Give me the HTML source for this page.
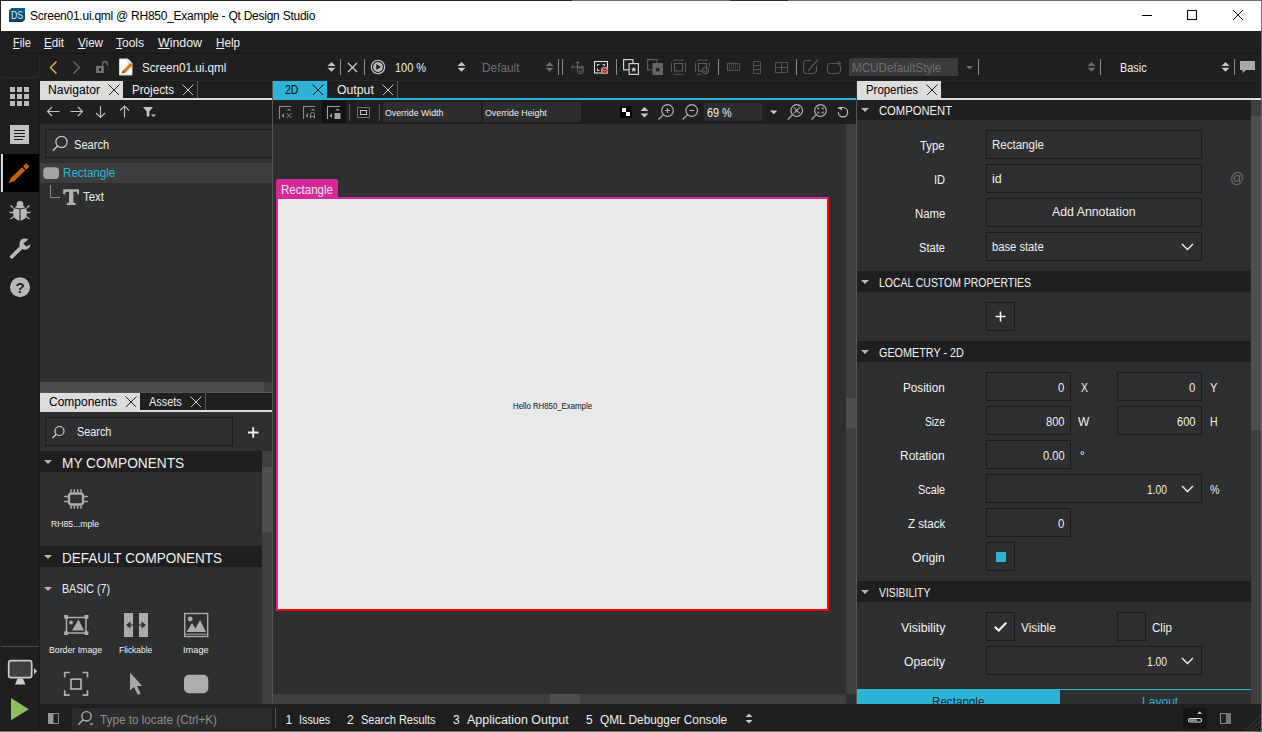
<!DOCTYPE html>
<html lang="en">
<head>
<meta charset="utf-8">
<title>Screen01.ui.qml @ RH850_Example - Qt Design Studio</title>
<style>
*{box-sizing:border-box;margin:0;padding:0}
html,body{width:1262px;height:732px;overflow:hidden;background:#2e2f30}
body{position:relative;font-family:"Liberation Sans",sans-serif;font-size:11.5px;color:#f0f0f0}
div,span,svg{position:absolute}
.t{white-space:nowrap;line-height:14px;height:14px}
.r{text-align:right}
.c{text-align:center}
u{text-decoration:underline;text-underline-offset:1px}
.dk{background:#1f1f1f}
.box{border:1px solid #1c1c1c;background:#2e2f30}
.hd{background:#1f1f1f;height:20px}
.hd .t{left:22px;top:4px;font-size:12.3px;color:#f4f4f4}
.tri{width:0;height:0;border-left:4px solid transparent;border-right:4px solid transparent;border-top:4px solid #b8b8b8}
.lab{left:857px;width:88px;text-align:right;color:#f4f4f4}
.sep{width:1px;background:#6b6b6b}
svg{overflow:visible}
</style>
</head>
<body>
<!-- ===== window frame / title bar ===== -->
<div style="left:0;top:0;width:1262px;height:31px;background:#fff"></div>
<div style="left:0;top:0;width:1262px;height:1px;background:#20262e"></div><div style="left:572px;top:0;width:690px;height:1px;background:#707070"></div><div style="left:730px;top:0;width:58px;height:1px;background:#2a2a2a"></div>
<div style="left:0;top:0;width:1px;height:732px;background:#1c222a"></div>
<svg style="left:9px;top:8px" width="16" height="14" viewBox="9 8 16 14"><defs><linearGradient id="dsg" x1="0" y1="0" x2="0" y2="1"><stop offset="0" stop-color="#0a5f92"/><stop offset="1" stop-color="#03406a"/></linearGradient></defs><path d="M11.500 8H25V19.500L22.500 22H9V10.500Z" fill="url(#dsg)"/><text x="11" y="19" font-family="Liberation Sans,sans-serif" font-size="11" fill="#dbe8f0" textLength="12.200" lengthAdjust="spacingAndGlyphs">DS</text></svg>
<div class="t" id="title" style="left:30px;top:9px;font-size:12px;color:#000;letter-spacing:-.25px">Screen01.ui.qml @ RH850_Example - Qt Design Studio</div>
<svg style="left:1142px;top:10px" width="102" height="11" viewBox="0 0 102 11" fill="none" stroke="#000" stroke-width="1"><path d="M0 5.5H10"/><rect x="45.5" y=".5" width="9" height="9"/><path d="M91 0L101 10M101 0L91 10"/></svg>

<!-- ===== menu bar ===== -->
<div class="dk" style="left:1px;top:31px;width:1261px;height:49px"></div>
<div style="left:1px;top:53px;width:1261px;height:1px;background:#191919"></div>
<div style="left:1px;top:77px;width:38px;height:1px;background:#2a2a2a"></div><div style="left:39px;top:54px;width:1px;height:24px;background:#272727"></div>
<div class="t" id="m1" style="left:12.5px;top:36px;width:auto;text-align:left;font-size:12px;transform:scaleX(0.9195);transform-origin:0 50%"><u>F</u>ile</div>
<div class="t" id="m2" style="left:44px;top:36px;width:auto;text-align:left;font-size:12px;transform:scaleX(0.966);transform-origin:0 50%"><u>E</u>dit</div>
<div class="t" id="m3" style="left:78px;top:36px;width:auto;text-align:left;font-size:12px;transform:scaleX(0.9685);transform-origin:0 50%"><u>V</u>iew</div>
<div class="t" id="m4" style="left:116px;top:36px;width:auto;text-align:left;font-size:12px;transform:scaleX(0.9994);transform-origin:0 50%"><u>T</u>ools</div>
<div class="t" id="m5" style="left:158px;top:36px;width:auto;text-align:left;font-size:12px;transform:scaleX(1.0307);transform-origin:0 50%"><u>W</u>indow</div>
<div class="t" id="m6" style="left:216.3px;top:36px;width:auto;text-align:left;font-size:12px;transform:scaleX(0.9722);transform-origin:0 50%"><u>H</u>elp</div>

<!-- ===== main toolbar ===== -->
<svg style="left:40px;top:54px" width="1222" height="24" viewBox="40 54 1222 24" fill="none">
 <path d="M56.5 61.5L50.5 67.5L56.5 73.5" stroke="#f0bd1e" stroke-width="1.4"/>
 <path d="M73.5 61.5L79.5 67.5L73.5 73.5" stroke="#6c6c6c" stroke-width="1.4"/>
 <rect x="96" y="66" width="8" height="7" fill="#6c6c6c"/><rect x="99" y="68" width="2" height="3" fill="#1f1f1f"/>
 <path d="M102.5 66V64a2.5 2.5 0 0 1 5 0V66" stroke="#6c6c6c" stroke-width="1.3"/>
 <path d="M119.500 59H128L132 63V75H119.500Z" fill="#fbfbfb" stroke="#d4d4d4"/><path d="M128 59V63H132" stroke="#c0c0c0"/>
 <path d="M122 73.500L123 70.300L130.500 63L132.800 65.200L125.300 72.500Z" fill="#e07a10"/><path d="M122 73.500L123 70.300L125.300 72.500Z" fill="#6a4418"/>
 <path d="M327.5 66L331.5 62L335.5 66ZM327.5 67.700L331.5 71.800L335.5 67.700Z" fill="#c6c6c6"/>
 <path d="M340.500 59V75M364.500 59V75" stroke="#8a8a8a"/>
 <path d="M348 63L357 72M357 63L348 72" stroke="#cccccc" stroke-width="1.200"/>
 <circle cx="378" cy="67" r="6.700" stroke="#c8c8c8" stroke-width="1.100"/><circle cx="378" cy="67" r="4.900" fill="#b8b8b8"/><path d="M376.300 64L381 67L376.300 70Z" fill="#1f1f1f"/>
 <path d="M457.5 66L461.5 62L465.5 66ZM457.5 67.700L461.5 71.800L465.5 67.700Z" fill="#c6c6c6"/>
 <path d="M545.5 66L549.5 62L553.5 66ZM545.5 67.700L549.5 71.800L553.5 67.700Z" fill="#6c6c6c"/>
 <path d="M558.500 59V75M562.500 59V75" stroke="#8a8a8a"/>
 <!-- move/reset (grey) -->
 <g stroke="#666" stroke-width="1"><path d="M577.500 61.500V70M571.500 67H583.500M575.500 63.500L577.500 61.500L579.500 63.500M573.500 65L571.500 67L573.500 69M581.500 65L583.500 67L581.500 69"/><circle cx="580.500" cy="70.500" r="3.200" fill="#1f1f1f"/><path d="M579 70.500a1.500 1.500 0 1 0 1.500-1.500" stroke-width=".9"/></g>
 <!-- frame + red reset -->
 <rect x="594.500" y="61.500" width="13" height="11.500" stroke="#e0e0e0" stroke-width="1.100"/>
 <path d="M597.500 66V64.500H599.500M602.500 64.500H604.500V66M597.500 68.500V70.500H599.500" stroke="#e0e0e0" stroke-width="1"/>
 <circle cx="604.500" cy="70.500" r="3.700" fill="#e57373"/><path d="M603 70.700a1.600 1.600 0 1 0 1.600-1.700" stroke="#1f1f1f" stroke-width=".9"/><path d="M603.500 68L605 69.200L603.500 70.200Z" fill="#1f1f1f"/>
 <path d="M616.500 59V75" stroke="#8a8a8a"/>
 <!-- copy icons -->
 <rect x="623.600" y="59.600" width="9.300" height="10.200" stroke="#cfcfcf" stroke-width="1.200"/><rect x="629.100" y="63.600" width="9.300" height="10.800" fill="#1f1f1f" stroke="#cfcfcf" stroke-width="1.200"/><path d="M633.700 66.800L634.500 68.500L636.300 68.700L635 69.900L635.300 71.700L633.700 70.800L632.100 71.700L632.400 69.900L631.100 68.700L632.900 68.500Z" fill="#cfcfcf"/>
 <rect x="647.600" y="59.600" width="9.300" height="10.200" stroke="#5e5e5e" stroke-width="1.200"/><rect x="652.500" y="63" width="10.500" height="12" fill="#666"/><path d="M657.700 66.800L658.500 68.500L660.300 68.700L659 69.900L659.300 71.700L657.700 70.800L656.100 71.700L656.400 69.900L655.100 68.700L656.900 68.500Z" fill="#1f1f1f"/>
 <path d="M671.500 62.500V72M685.500 62.500V72M673 60.200H684M673 74.300H684" stroke="#555" stroke-width="1"/><rect x="674.500" y="63.500" width="8" height="7.500" stroke="#606060" stroke-width="1.100"/>
 <path d="M695.500 62.500V72M709.500 62.500V67M697 60.200H708M697 74.300H702" stroke="#555" stroke-width="1"/><rect x="698.500" y="63.500" width="8" height="7.500" stroke="#606060" stroke-width="1.100"/><circle cx="705.500" cy="70.500" r="3.200" fill="#1f1f1f" stroke="#666"/><path d="M704 70.500a1.500 1.500 0 1 0 1.500-1.500" stroke="#666" stroke-width=".9"/>
 <path d="M718.500 59V75" stroke="#8a8a8a"/>
 <g stroke="#505050"><rect x="727.500" y="63.500" width="12" height="7"/><path d="M731.500 63.500V70.500M735.500 63.500V70.500M729.500 64V70M733.500 64V70M737.500 64V70" stroke="#3c3c3c"/>
 <rect x="753.500" y="61.500" width="7" height="12"/><path d="M753.500 65.500H760.500M753.500 69.500H760.500"/>
 <rect x="775.500" y="62.500" width="12" height="10"/><path d="M781.500 62.500V72.500M775.500 67.500H787.500"/></g>
 <path d="M796.500 59V75" stroke="#8a8a8a"/>
 <path d="M816.500 66V70.500a3 3 0 0 1-3 3H806.500a3 3 0 0 1-3-3V63.500a3 3 0 0 1 3-3H811" stroke="#585858" stroke-width="1.100"/><path d="M808 71L818 59.500" stroke="#585858" stroke-width="1.200"/>
 <path d="M840.500 66V70.500a3 3 0 0 1-3 3H830.500a3 3 0 0 1-3-3V66.500a3 3 0 0 1 3-3H840M838 61L840.500 63.500L838 66" stroke="#555" stroke-width="1.100"/>
 <rect x="849" y="58" width="109" height="18" fill="#3a3b3c"/>
 <path d="M966 66H973L969.500 69.500Z" fill="#6c6c6c"/>
 <path d="M978.500 59V75M1100.500 59V75M1234.500 59V75" stroke="#8a8a8a"/>
 <path d="M1087.5 66L1091.5 62L1095.5 66ZM1087.5 67.700L1091.5 71.800L1095.5 67.700Z" fill="#6c6c6c"/>
 <path d="M1221.5 66L1225.5 62L1229.5 66ZM1221.5 67.700L1225.5 71.800L1229.5 67.700Z" fill="#c6c6c6"/>
 <path d="M1240 61H1255V70H1246L1242.500 73V70H1240Z" fill="#a8a8a8"/>
</svg>
<div class="t" id="tb1" style="left:142px;top:61px;width:auto;text-align:left;font-size:12px;transform:scaleX(0.9721);transform-origin:0 50%">Screen01.ui.qml</div>
<div class="t" id="tb2" style="left:395.4px;top:61px;width:auto;text-align:left;font-size:12px;transform:scaleX(0.9109);transform-origin:0 50%">100 %</div>
<div class="t" id="tb3" style="left:482px;top:61px;color:#6e6e6e;width:auto;text-align:left;font-size:12px;transform:scaleX(0.986);transform-origin:0 50%">Default</div>
<div class="t" id="tb4" style="left:851.7px;top:61px;color:#6e6e6e;width:auto;text-align:left;font-size:12px;transform:scaleX(0.9703);transform-origin:0 50%">MCUDefaultStyle</div>
<div class="t" id="tb5" style="left:1120px;top:61px;width:auto;text-align:left;font-size:12px;transform:scaleX(0.9099);transform-origin:0 50%">Basic</div>
<!--TOOLBAR-->
<!-- ===== mode sidebar ===== -->
<div style="left:39px;top:78px;width:1px;height:654px;background:#191919"></div>
<div class="dk" style="left:1px;top:80px;width:38px;height:652px"></div>
<div style="left:1px;top:154px;width:38px;height:38px;background:#000"></div>
<div style="left:1px;top:154px;width:2px;height:38px;background:#d8d8d8"></div>
<div style="left:1px;top:646px;width:38px;height:1px;background:#4a4a4a"></div>
<svg style="left:0;top:78px" width="40" height="654" viewBox="0 78 40 654" fill="none">
 <g fill="#bcbcbc"><rect x="10" y="87" width="5" height="5"/><rect x="17" y="87" width="5" height="5"/><rect x="24" y="87" width="5" height="5"/><rect x="10" y="94" width="5" height="5"/><rect x="17" y="94" width="5" height="5"/><rect x="24" y="94" width="5" height="5"/><rect x="10" y="101" width="5" height="5"/><rect x="17" y="101" width="5" height="5"/><rect x="24" y="101" width="5" height="5"/></g>
 <rect x="10" y="125" width="19" height="19" fill="#c2c2c2"/><path d="M14 130.500H25M14 133.500H25M14 136.500H25M14 139.500H23" stroke="#1a1a1a" stroke-width="1.200"/>
 <g transform="translate(9 183) rotate(-44)" fill="#c5630c"><path d="M0 0L4.500 -2.300H20.300V2.300H4.500Z"/><path d="M21.600 -2.300H26.200V2.300H21.600Z"/></g>
 <g fill="#b8b8b8"><ellipse cx="20" cy="212.700" rx="7" ry="8"/><circle cx="20" cy="204.300" r="3.300"/></g><path d="M10.500 205.500L14 208.500M29.500 205.500L26 208.500M9.500 212.500H13.500M30.500 212.500H26.500M10.500 219L14 216.500M29.500 219L26 216.500" stroke="#b8b8b8" stroke-width="1.400"/><path d="M20 209V221" stroke="#1f1f1f" stroke-width="1.100"/><path d="M13 207.500Q20 210.500 27 207.500" stroke="#1f1f1f" stroke-width=".9" fill="none"/>
 <path d="M11.800 256.800L21 247.600" stroke="#b8b8b8" stroke-width="3.700" stroke-linecap="round"/><path d="M28.300 239.600a5.600 5.600 0 1 0 2.200 4.600L26.500 246.600L23.300 243.400Z" fill="#b8b8b8"/>
 <circle cx="20" cy="287.200" r="10" fill="#b8b8b8"/>
 <rect x="8.700" y="660.700" width="23" height="17" rx="2.200" fill="#404040" stroke="#cccccc" stroke-width="1.700"/><path d="M15 684.500L17.500 678.500H23L25.500 684.500Z" fill="#cccccc"/><path d="M34 668L37 671.300L34 674.600Z" fill="#cccccc"/>
 <path d="M11 698L28.800 709.200L11 720.300Z" fill="#8cbf5e"/>
</svg>
<div class="t" style="left:14px;top:280.500px;width:12px;font-size:15px;font-weight:bold;color:#1f1f1f;text-align:center">?</div>
<!--SIDEBAR-->
<!-- ===== left panel: Navigator ===== -->
<div class="dk" style="left:40px;top:80px;width:232px;height:44px"></div>
<div style="left:40px;top:81px;width:83px;height:19px;background:#dcdcdc"></div>
<div style="left:40px;top:98px;width:232px;height:2px;background:#dcdcdc"></div>
<div style="left:197px;top:81px;width:1px;height:17px;background:#5a5a5a"></div>
<div class="box" style="left:45px;top:129px;width:227px;height:29px;border-right:0"></div>
<div class="t" id="nv1" style="left:48px;top:83px;color:#000;width:auto;text-align:left;font-size:12px;transform:scaleX(1.0125);transform-origin:0 50%">Navigator</div>
<div class="t" id="nv2" style="left:132px;top:83px;width:auto;text-align:left;font-size:12px;transform:scaleX(0.9686);transform-origin:0 50%">Projects</div>
<svg style="left:40px;top:80px" width="232" height="130" viewBox="40 80 232 130" fill="none">
 <path d="M108.5 84.5L119 95M119.5 84.5L109 95" stroke="#222" stroke-width="1"/>
 <path d="M182.5 84.5L193 95M193.5 84.5L183 95" stroke="#d0d0d0" stroke-width="1"/>
 <g stroke="#c4c4c4" stroke-width="1.100"><path d="M47.500 111.500H59.500M52 107L47.500 111.500L52 116"/><path d="M70.500 111.500H82.500M78 107L82.500 111.500L78 116"/><path d="M100.500 106V117.500M96 113L100.500 117.500L105 113"/><path d="M124.500 117.500V106M120 110.500L124.500 106L129 110.500"/></g>
 <path d="M143 107H153L149.300 111.500V116.500H146.700V111.500Z" fill="#c4c4c4"/><path d="M151 114.500H156L153.500 117Z" fill="#c4c4c4"/>
 <circle cx="61.500" cy="142" r="5.600" stroke="#cacaca" stroke-width="1.200"/><path d="M57.500 146L52.800 150.700" stroke="#cacaca" stroke-width="1.300"/>
</svg>
<div class="t" id="nv3" style="left:73.7px;top:138px;width:auto;text-align:left;font-size:12px;transform:scaleX(0.9282);transform-origin:0 50%">Search</div>
<div style="left:40px;top:163px;width:232px;height:20px;background:#3d3d3e"></div>
<div class="t" id="nv4" style="left:63.3px;top:166px;color:#2fb4da;width:auto;text-align:left;font-size:12px;transform:scaleX(0.9677);transform-origin:0 50%">Rectangle</div>
<div class="t" id="nv5" style="left:82.6px;top:190px;width:auto;text-align:left;font-size:12px;transform:scaleX(0.9539);transform-origin:0 50%">Text</div>
<svg style="left:40px;top:160px" width="40" height="50" viewBox="40 160 40 50" fill="none">
 <rect x="43.200" y="167.200" width="15.800" height="11.800" rx="3.800" fill="#a4a4a4"/>
 <path d="M50.500 185V197.500H60" stroke="#8a8a8a"/>
 <path d="M63.200 189.300H79V194.200H77.300L76.800 191.800H73.400V202.600L75.700 203.200V205.100H66.700V203.200L69 202.600V191.800H65.600L65.100 194.200H63.200Z" fill="#b0b0b0"/>
</svg>
<div style="left:40px;top:382px;width:224px;height:10px;background:#4d4d4d"></div>
<div style="left:264px;top:382px;width:8px;height:10px;background:#404040"></div>
<!-- ===== left panel: Components ===== -->
<div style="left:40px;top:392px;width:232px;height:1px;background:#555"></div>
<div class="dk" style="left:40px;top:393px;width:232px;height:17px"></div>
<div style="left:40px;top:393px;width:100px;height:19px;background:#dcdcdc"></div>
<div style="left:40px;top:410px;width:232px;height:2px;background:#dcdcdc"></div>
<div style="left:205px;top:393px;width:1px;height:17px;background:#5a5a5a"></div>
<div class="t" id="cp1" style="left:48.5px;top:395px;color:#000;width:auto;text-align:left;font-size:12px;transform:scaleX(0.9993);transform-origin:0 50%">Components</div>
<div class="t" id="cp2" style="left:149px;top:395px;width:auto;text-align:left;font-size:12px;transform:scaleX(0.9107);transform-origin:0 50%">Assets</div>
<div class="box" style="left:45px;top:417px;width:188px;height:29px"></div>
<div class="t" id="cp3" style="left:77px;top:425px;width:auto;text-align:left;font-size:12px;transform:scaleX(0.9045);transform-origin:0 50%">Search</div>
<div class="dk" style="left:40px;top:451px;width:222px;height:21px"></div>
<div class="dk" style="left:40px;top:546px;width:222px;height:21px"></div>
<div style="left:262px;top:451px;width:10px;height:253px;background:#3f3f3f"></div>
<div style="left:262px;top:467px;width:10px;height:65px;background:#4f4f4f"></div>
<div class="t" id="cp4" style="left:62.3px;top:456px;width:auto;text-align:left;font-size:14.4px;transform:scaleX(0.9512);transform-origin:0 50%">MY COMPONENTS</div>
<div class="t" id="cp5" style="left:61.6px;top:551px;width:auto;text-align:left;font-size:14.4px;transform:scaleX(0.9373);transform-origin:0 50%">DEFAULT COMPONENTS</div>
<div class="t" id="cp6" style="left:61.7px;top:582px;width:auto;text-align:left;font-size:12px;transform:scaleX(0.8886);transform-origin:0 50%">BASIC (7)</div>
<div class="tri" style="left:44px;top:460px"></div>
<div class="tri" style="left:44px;top:555px"></div>
<div class="tri" style="left:44px;top:587px"></div>
<div class="t c" id="ci1" style="left:50.5px;top:517px;width:auto;text-align:left;font-size:9.2px;transform:scaleX(0.942);transform-origin:0 50%">RH85...mple</div>
<div class="t c" id="ci2" style="left:49.2px;top:643px;width:auto;text-align:left;font-size:9.2px;transform:scaleX(0.952);transform-origin:0 50%">Border Image</div>
<div class="t c" id="ci3" style="left:118.8px;top:643px;width:auto;text-align:left;font-size:9.2px;transform:scaleX(0.9155);transform-origin:0 50%">Flickable</div>
<div class="t c" id="ci4" style="left:182.5px;top:643px;width:auto;text-align:left;font-size:9.2px;transform:scaleX(1.006);transform-origin:0 50%">Image</div>
<svg style="left:40px;top:412px" width="232" height="292" viewBox="40 412 232 292" fill="none">
 <circle cx="59.500" cy="431" r="4.500" stroke="#d0d0d0" stroke-width="1.200"/><path d="M56.200 434.300L52.500 438" stroke="#d0d0d0" stroke-width="1.300"/>
 <path d="M248 432.500H258.500M253.200 427.300V437.700" stroke="#f0f0f0" stroke-width="1.800"/>
 <!-- chip -->
 <g stroke="#acacac"><rect x="69" y="493.500" width="14" height="11" rx="2.500" stroke-width="2.400"/><path d="M71 489.200V492.500M74.300 489.200V492.500M77.700 489.200V492.500M81 489.200V492.500M71 505.500V508.800M74.300 505.500V508.800M77.700 505.500V508.800M81 505.500V508.800M64.200 496.500H68M64.200 501.500H68M84 496.500H87.800M84 501.500H87.800" stroke-width="1.500"/></g>
 <!-- border image -->
 <rect x="66.500" y="617.500" width="19.500" height="15.500" stroke="#acacac" stroke-width="1.500"/><path d="M64.200 615H68V618.800H64.200ZM84.600 615H88.400V618.800H84.600ZM64.200 631.200H68V635H64.200ZM84.600 631.200H88.400V635H84.600Z" fill="#acacac"/><path d="M72 630.500L78.500 619.500L84 630.500Z" fill="#acacac"/><circle cx="71" cy="622.500" r="1.900" fill="#acacac"/>
 <!-- flickable -->
 <rect x="124" y="613" width="9" height="24" fill="#acacac"/><rect x="139" y="613" width="9" height="24" fill="#acacac"/><path d="M126 625L130.500 621.500V628.500ZM146 625L141.500 621.500V628.500Z" fill="#2e2f30"/><path d="M130 625H133M139 625H142" stroke="#2e2f30" stroke-width="1.200"/>
 <!-- image -->
 <rect x="184.700" y="613.500" width="23" height="23" stroke="#acacac" stroke-width="1.400"/><path d="M186.500 632L192 623L195.500 628.500L200 620L206 632Z" fill="#acacac"/><path d="M186 634.200H206.500" stroke="#acacac" stroke-width="1"/><circle cx="190.200" cy="619" r="2.400" fill="#acacac"/>
 <!-- focus frame -->
 <g stroke="#b0b0b0" stroke-width="1.700"><path d="M64.700 677.500V672.500H69.700M82.500 672.500H87.500V677.500M64.700 690.200V695.200H69.700M82.500 695.200H87.500V690.200"/><rect x="71" y="679.200" width="10" height="9.800"/></g>
 <!-- cursor -->
 <path d="M130 672.500V690.500L134 687L137.800 695L140.600 693.600L137 686H142.300Z" fill="#a8a8a8"/>
 <!-- rounded rect -->
 <rect x="184" y="674.700" width="24.300" height="18.600" rx="5" fill="#acacac"/>
</svg>
<svg style="left:40px;top:392px" width="232" height="20" viewBox="40 392 232 20" fill="none">
 <path d="M125.5 396.5L136 407M136.5 396.5L126 407" stroke="#222"/>
 <path d="M190.5 396.5L201 407M201.5 396.5L191 407" stroke="#d0d0d0"/>
</svg>
<div style="left:272px;top:100px;width:1px;height:604px;background:#555"></div>
<!--LEFTPANEL-->
<!-- ===== center: 2D view ===== -->
<div class="dk" style="left:273px;top:80px;width:583px;height:44px"></div>
<div style="left:273px;top:81px;width:54px;height:19px;background:#2db2d8"></div>
<div style="left:273px;top:98px;width:583px;height:2px;background:#2db2d8"></div>
<div style="left:397px;top:81px;width:1px;height:17px;background:#5a5a5a"></div>
<div class="t" id="ct1" style="left:284.9px;top:83px;color:#0a0a0a;width:auto;text-align:left;font-size:12px;transform:scaleX(0.8668);transform-origin:0 50%">2D</div>
<div class="t" id="ct2" style="left:336.8px;top:83px;width:auto;text-align:left;font-size:12px;transform:scaleX(1.0213);transform-origin:0 50%">Output</div>
<div style="left:322px;top:101px;width:24px;height:22px;background:#121212"></div>
<div style="left:383px;top:102px;width:98px;height:20px;background:#2c2d2e"></div>
<div style="left:483px;top:102px;width:98px;height:20px;background:#2c2d2e"></div>
<div style="left:704px;top:103px;width:58px;height:18px;background:#2c2d2e"></div>
<div class="t" id="ct3" style="left:385.4px;top:106px;width:auto;text-align:left;font-size:9px;transform:scaleX(0.9712);transform-origin:0 50%">Override Width</div>
<div class="t" id="ct4" style="left:485.2px;top:106px;width:auto;text-align:left;font-size:9px;transform:scaleX(0.9805);transform-origin:0 50%">Override Height</div>
<div class="t" id="ct5" style="left:706.5px;top:106px;width:auto;text-align:left;font-size:12px;transform:scaleX(0.9028);transform-origin:0 50%">69 %</div>
<svg style="left:273px;top:80px" width="583" height="44" viewBox="273 80 583 44" fill="none">
 <path d="M312.5 84.5L323 95M323.5 84.5L313 95" stroke="#0a0a0a"/>
 <path d="M382.5 84.5L393 95M393.5 84.5L383 95" stroke="#d0d0d0"/>
 <g stroke="#8a8a8a" stroke-width="1.100"><path d="M279.500 119V106.500H291.500"/><path d="M303.500 119V106.500H315.500"/></g>
 <path d="M327.500 119V106.500H340" stroke="#a4a4a4" stroke-width="1.100"/>
 <g fill="#8a8a8a"><path d="M281.500 115.500L284 113V118ZM286.500 110.500H291.500L289 108.500Z"/><path d="M305.500 115.500L308 113V118ZM310.500 110.500H315.500L313 108.500Z"/></g>
 <g fill="#a4a4a4"><path d="M329.500 115.500L332 113V118ZM335 110.500H340L337.500 108.500Z"/><rect x="334.500" y="113" width="6" height="6"/></g>
 <path d="M286.500 113L291.500 118M291.500 113L286.500 118" stroke="#8a8a8a"/>
 <path d="M310.500 118.500V114.500a1.500 1.500 0 0 1 4 0V118.500M310.500 116.500H314.500" stroke="#8a8a8a"/>
 <path d="M349.500 104V121M379.500 104V121" stroke="#555"/>
 <rect x="357.500" y="107.500" width="12" height="10" stroke="#c0c0c0" stroke-dasharray="1 1"/><rect x="360.500" y="110.500" width="6" height="4" stroke="#c0c0c0"/>
 <rect x="620" y="106" width="12" height="12" fill="#000"/><rect x="622" y="108" width="4" height="4" fill="#fff"/><rect x="626" y="112" width="4" height="4" fill="#fff"/>
 <path d="M640.500 111L644.500 107L648.500 111ZM640.500 113.500L644.500 117.500L648.500 113.500Z" fill="#c8c8c8"/>
 <g stroke="#b4b4b4" stroke-width="1.200"><circle cx="667.500" cy="110.500" r="5.800"/><path d="M663.400 114.600L658.500 119.500"/><circle cx="691.700" cy="110.500" r="5.800"/><path d="M687.600 114.600L682.700 119.500"/><circle cx="796.700" cy="110.500" r="5.800"/><path d="M792.600 114.600L787.700 119.500"/><circle cx="820.500" cy="110.500" r="5.800"/><path d="M816.400 114.600L811.500 119.500"/></g>
 <path d="M665 110.500H670M667.500 108V113M689.200 110.500H694.200" stroke="#b4b4b4" stroke-width="1.100"/>
 <path d="M794.900 108.700L798.500 112.300M798.500 108.700L794.900 112.300" stroke="#b4b4b4" stroke-width="1.100"/><path d="M794 109V107.800H795.200M798.200 107.800H799.400V109M799.400 112V113.200H798.200M795.200 113.200H794V112" stroke="#b4b4b4" stroke-width=".8"/>
 <path d="M818 109.500V108H819.500M821.500 108H823V109.500M823 111.500V113H821.500M819.500 113H818V111.500" stroke="#b4b4b4" stroke-width="1.100"/>
 <path d="M770 110.500H777.500L773.750 114.200Z" fill="#c8c8c8"/>
 <path d="M838.300 112.200a4.700 4.700 0 1 0 4.700-4.700H840.500" stroke="#c0c0c0" stroke-width="1.200"/><path d="M837.600 107.200H841.800V111Z" fill="#c0c0c0" transform="rotate(-14 839.500 109)"/>
</svg>
<!-- canvas -->
<div style="left:276px;top:179px;width:62px;height:20px;background:#d7289a;border-radius:2px 2px 0 0"></div>
<div style="left:276px;top:197px;width:553px;height:414px;background:#e8e8e8;border:2px solid #d7289a;border-right-color:#f00;border-bottom-color:#f00"></div>
<div style="left:276px;top:197px;width:551px;height:2px;background:#d7289a"></div>
<div style="left:276px;top:197px;width:2px;height:412px;background:#d7289a"></div>
<div class="t" id="ct6" style="left:281px;top:183px;color:#f3e3ee;width:auto;text-align:left;font-size:12px;transform:scaleX(0.9621);transform-origin:0 50%">Rectangle</div>
<div class="t c" id="ct7" style="left:513px;top:399.5px;color:#111;width:auto;text-align:left;font-size:8.2px;transform:scaleX(0.9538);transform-origin:0 50%">Hello RH850_Example</div>
<div style="left:846px;top:124px;width:10px;height:570px;background:#3f3f3f"></div>
<div style="left:846px;top:398px;width:10px;height:30px;background:#4f4f4f"></div>
<div style="left:273px;top:694px;width:573px;height:10px;background:#3f3f3f"></div>
<div style="left:550px;top:694px;width:30px;height:10px;background:#4f4f4f"></div>
<div style="left:856px;top:100px;width:1px;height:604px;background:#555"></div>
<!--CENTER-->
<!-- ===== right: Properties ===== -->
<div class="dk" style="left:857px;top:80px;width:405px;height:18px"></div>
<div style="left:857px;top:81px;width:84px;height:19px;background:#dcdcdc"></div>
<div style="left:857px;top:98px;width:404px;height:2px;background:#dcdcdc"></div>
<div class="t" id="rp0" style="left:865.5px;top:83px;color:#000;width:auto;text-align:left;font-size:12px;transform:scaleX(0.9506);transform-origin:0 50%">Properties</div>
<svg style="left:857px;top:80px" width="100" height="20" viewBox="857 80 100 20" fill="none"><path d="M926.5 84.5L937 95M937.5 84.5L927 95" stroke="#222"/></svg>
<div style="left:1251px;top:100px;width:10px;height:604px;background:#3f3f3f"></div>
<div style="left:1251px;top:116px;width:10px;height:314px;background:#4f4f4f"></div>


<div class="hd" style="left:857px;top:100px;width:394px"><div class="tri" style="left:4px;top:8px"></div><div class="t" id="h1" style="left:22px;width:auto;text-align:left;font-size:12.3px;transform:scaleX(0.9132);transform-origin:0 50%">COMPONENT</div></div>
<div class="hd" style="left:857px;top:271px;width:394px;height:21px"><div class="tri" style="left:4px;top:9px"></div><div class="t" id="h2" style="left:22px;top:5px;width:auto;text-align:left;font-size:12.3px;transform:scaleX(0.8501);transform-origin:0 50%">LOCAL CUSTOM PROPERTIES</div></div>
<div class="hd" style="left:857px;top:341px;width:394px;height:21px"><div class="tri" style="left:4px;top:9px"></div><div class="t" id="h3" style="left:22.2px;top:5px;width:auto;text-align:left;font-size:12.3px;transform:scaleX(0.8791);transform-origin:0 50%">GEOMETRY - 2D</div></div>
<div class="hd" style="left:857px;top:581px;width:394px;height:21px"><div class="tri" style="left:4px;top:9px"></div><div class="t" id="h4" style="left:22.2px;top:5px;width:auto;text-align:left;font-size:12.3px;transform:scaleX(0.8434);transform-origin:0 50%">VISIBILITY</div></div>

<!-- COMPONENT rows -->
<div class="t lab" id="l1" style="left:920.4px;top:139px;width:auto;text-align:left;font-size:12px;transform:scaleX(0.9456);transform-origin:0 50%">Type</div>
<div class="t lab" id="l2" style="left:934px;top:173px;width:auto;text-align:left;font-size:12px;transform:scaleX(0.9167);transform-origin:0 50%">ID</div>
<div class="t lab" id="l3" style="left:914.7px;top:207px;width:auto;text-align:left;font-size:12px;transform:scaleX(0.9464);transform-origin:0 50%">Name</div>
<div class="t lab" id="l4" style="left:919px;top:241px;width:auto;text-align:left;font-size:12px;transform:scaleX(0.9275);transform-origin:0 50%">State</div>
<div class="box" style="left:986px;top:130px;width:216px;height:29px"><div class="t" id="v1" style="left:5.1px;top:7px;width:auto;text-align:left;font-size:12px;transform:scaleX(0.9603);transform-origin:0 50%">Rectangle</div></div>
<div class="box" style="left:986px;top:164px;width:216px;height:29px"><div class="t" id="v2" style="left:5.3px;top:7px;width:auto;text-align:left;font-size:12px;transform:scaleX(1.0381);transform-origin:0 50%">id</div></div>
<div class="box" style="left:986px;top:198px;width:216px;height:29px"><div class="t c" id="v3" style="left:65px;top:6px;width:auto;text-align:left;font-size:12px;transform:scaleX(1.0269);transform-origin:0 50%">Add Annotation</div></div>
<div class="box" style="left:986px;top:232px;width:216px;height:29px"><div class="t" id="v4" style="left:5.3px;top:7px;width:auto;text-align:left;font-size:12px;transform:scaleX(0.9336);transform-origin:0 50%">base state</div></div>
<div class="t" id="at" style="left:1230px;top:171px;font-size:14px;color:#707070">@</div>
<!-- LOCAL CUSTOM -->
<div class="box" style="left:986px;top:302px;width:29px;height:29px"></div>
<!-- GEOMETRY rows -->
<div class="t lab" id="l5" style="left:903.3px;top:381px;width:auto;text-align:left;font-size:12px;transform:scaleX(0.9765);transform-origin:0 50%">Position</div>
<div class="t lab" id="l6" style="left:925.1px;top:415px;width:auto;text-align:left;font-size:12px;transform:scaleX(0.8525);transform-origin:0 50%">Size</div>
<div class="t lab" id="l7" style="left:900.4px;top:449px;width:auto;text-align:left;font-size:12px;transform:scaleX(0.9977);transform-origin:0 50%">Rotation</div>
<div class="t lab" id="l8" style="left:917.9px;top:483px;width:auto;text-align:left;font-size:12px;transform:scaleX(0.9024);transform-origin:0 50%">Scale</div>
<div class="t lab" id="l9" style="left:907.7px;top:517px;width:auto;text-align:left;font-size:12px;transform:scaleX(0.9645);transform-origin:0 50%">Z stack</div>
<div class="t lab" id="l10" style="left:912.2px;top:551px;width:auto;text-align:left;font-size:12px;transform:scaleX(1.0245);transform-origin:0 50%">Origin</div>
<div class="box" style="left:986px;top:372px;width:85px;height:29px"><div class="t r" id="g1" style="left:71.3px;top:8px;width:auto;text-align:left;font-size:12px;transform:scaleX(0.9421);transform-origin:0 50%">0</div></div>
<div class="box" style="left:1117px;top:372px;width:85px;height:29px"><div class="t r" id="g2" style="left:71.2px;top:8px;width:auto;text-align:left;font-size:12px;transform:scaleX(0.9421);transform-origin:0 50%">0</div></div>
<div class="box" style="left:986px;top:406px;width:85px;height:29px"><div class="t r" id="g3" style="left:59.2px;top:8px;width:auto;text-align:left;font-size:12px;transform:scaleX(0.9186);transform-origin:0 50%">800</div></div>
<div class="box" style="left:1117px;top:406px;width:85px;height:29px"><div class="t r" id="g4" style="left:59px;top:8px;width:auto;text-align:left;font-size:12px;transform:scaleX(0.9236);transform-origin:0 50%">600</div></div>
<div class="box" style="left:986px;top:440px;width:85px;height:29px"><div class="t r" id="g5" style="left:56px;top:8px;width:auto;text-align:left;font-size:12px;transform:scaleX(0.9247);transform-origin:0 50%">0.00</div></div>
<div class="box" style="left:986px;top:474px;width:216px;height:29px"><div class="t r" id="g6" style="left:160px;top:8px;width:auto;text-align:left;font-size:12px;transform:scaleX(0.8562);transform-origin:0 50%">1.00</div></div>
<div class="box" style="left:986px;top:508px;width:85px;height:29px"><div class="t r" id="g7" style="left:71.3px;top:8px;width:auto;text-align:left;font-size:12px;transform:scaleX(0.9421);transform-origin:0 50%">0</div></div>
<div class="box" style="left:986px;top:542px;width:29px;height:29px"><div style="left:9px;top:9px;width:10px;height:10px;background:#2db2d8"></div></div>
<div class="t" id="u1" style="left:1080.5px;top:381px;width:auto;text-align:left;font-size:12px;transform:scaleX(0.8608);transform-origin:0 50%">X</div>
<div class="t" id="u2" style="left:1210.4px;top:381px;width:auto;text-align:left;font-size:12px;transform:scaleX(0.9481);transform-origin:0 50%">Y</div>
<div class="t" id="u3" style="left:1078px;top:415px;width:auto;text-align:left;font-size:12px;transform:scaleX(0.9975);transform-origin:0 50%">W</div>
<div class="t" id="u4" style="left:1210.4px;top:415px;width:auto;text-align:left;font-size:12px;transform:scaleX(0.8764);transform-origin:0 50%">H</div>
<div class="t" id="u5" style="left:1080px;top:448px">°</div>
<div class="t" id="u6" style="left:1209.8px;top:483px;width:auto;text-align:left;font-size:12px;transform:scaleX(0.8902);transform-origin:0 50%">%</div>
<!-- VISIBILITY rows -->
<div class="t lab" id="l11" style="left:900.7px;top:621px;width:auto;text-align:left;font-size:12px;transform:scaleX(1.0272);transform-origin:0 50%">Visibility</div>
<div class="t lab" id="l12" style="left:903.9px;top:655px;width:auto;text-align:left;font-size:12px;transform:scaleX(1.0101);transform-origin:0 50%">Opacity</div>
<div class="box" style="left:986px;top:612px;width:29px;height:29px"></div>
<div class="box" style="left:1117px;top:612px;width:29px;height:29px"></div>
<div class="t" id="k1" style="left:1020.9px;top:621px;width:auto;text-align:left;font-size:12px;transform:scaleX(0.9903);transform-origin:0 50%">Visible</div>
<div class="t" id="k2" style="left:1151.8px;top:621px;width:auto;text-align:left;font-size:12px;transform:scaleX(0.9627);transform-origin:0 50%">Clip</div>
<div class="box" style="left:986px;top:646px;width:216px;height:29px"><div class="t r" id="g8" style="left:160px;top:8px;width:auto;text-align:left;font-size:12px;transform:scaleX(0.8562);transform-origin:0 50%">1.00</div></div>
<svg style="left:857px;top:100px" width="394" height="604" viewBox="857 100 394 604" fill="none">
 <g stroke="#f0f0f0" stroke-width="1.400"><path d="M1182 244L1187.500 249.500L1193 244"/><path d="M1182 486L1187.500 491.500L1193 486"/><path d="M1182 658L1187.500 663.500L1193 658"/></g>
 <path d="M995.500 316.500H1005.500M1000.500 311.500V321.500" stroke="#f4f4f4" stroke-width="1.600"/>
 <path d="M994.800 626.800L998.700 630.600L1006.200 622.800" stroke="#f8f8f8" stroke-width="2.100"/>
</svg>
<!-- bottom tabs -->
<div style="left:857px;top:689px;width:203px;height:15px;background:#2db2d8"></div>
<div style="left:1060px;top:689px;width:191px;height:1px;background:#2db2d8"></div>
<div style="left:857px;top:689px;width:394px;height:15px;overflow:hidden">
 <div class="t c" id="bt1" style="left:75px;top:6px;color:#1a2a30;width:auto;text-align:left;font-size:12px;transform:scaleX(0.9695);transform-origin:0 50%">Rectangle</div>
 <div class="t c" id="bt2" style="left:284.6px;top:6px;color:#2db2d8;width:auto;text-align:left;font-size:12px;transform:scaleX(1.0047);transform-origin:0 50%">Layout</div>
</div>
<!--RIGHT-->
<!-- ===== status bar ===== -->
<div class="dk" style="left:40px;top:704px;width:1222px;height:28px"></div>
<div style="left:0;top:731px;width:1262px;height:1px;background:#6e6e6e"></div>
<div style="left:1261px;top:1px;width:1px;height:731px;background:#6e6e6e"></div>
<div style="left:72px;top:708px;width:200px;height:21px;background:#2b2c2d"></div>
<div style="left:1183px;top:708px;width:24px;height:21px;background:#141414"></div>
<div class="t" id="s0" style="left:99.8px;top:713px;color:#8c8c8c;width:auto;text-align:left;font-size:12px;transform:scaleX(0.9773);transform-origin:0 50%">Type to locate (Ctrl+K)</div>
<div class="t" id="s1" style="left:285.500px;top:713px;font-size:12px">1</div>
<div class="t" id="s1b" style="left:299px;top:713px;width:auto;text-align:left;font-size:12px;transform:scaleX(0.8995);transform-origin:0 50%">Issues</div>
<div class="t" id="s2" style="left:347px;top:713px;font-size:12px">2</div>
<div class="t" id="s2b" style="left:361px;top:713px;width:auto;text-align:left;font-size:12px;transform:scaleX(0.9167);transform-origin:0 50%">Search Results</div>
<div class="t" id="s3" style="left:453px;top:713px;font-size:12px">3</div>
<div class="t" id="s3b" style="left:467.3px;top:713px;width:auto;text-align:left;font-size:12px;transform:scaleX(1.0371);transform-origin:0 50%">Application Output</div>
<div class="t" id="s4" style="left:586px;top:713px;font-size:12px">5</div>
<div class="t" id="s4b" style="left:599.6px;top:713px;width:auto;text-align:left;font-size:12px;transform:scaleX(0.9863);transform-origin:0 50%">QML Debugger Console</div>
<svg style="left:40px;top:704px" width="1222" height="28" viewBox="40 704 1222 28" fill="none">
 <rect x="48.500" y="713.500" width="10" height="10" stroke="#8c8c8c"/><rect x="48" y="713" width="5.500" height="11" fill="#969696"/>
 <circle cx="86.500" cy="716.300" r="4.700" stroke="#b4b4b4" stroke-width="1.300"/><path d="M83.200 719.800L78.500 724.500" stroke="#b4b4b4" stroke-width="1.500"/><path d="M89.500 723.500H93.500L91.500 725.500Z" fill="#b4b4b4"/>
 <path d="M275.500 708V728" stroke="#555"/>
 <path d="M745.500 717L749 713.500L752.500 717ZM745.500 720L749 723.500L752.500 720Z" fill="#c6c6c6"/>
 <rect x="1188.500" y="718.500" width="13" height="3.500" rx="1.750" stroke="#dcdcdc" stroke-width="1.100"/><rect x="1189.500" y="719.200" width="7.500" height="2" fill="#8a8a8a"/><path d="M1197 713.800H1202.200L1199.600 711.500Z" fill="#dcdcdc"/>
 <rect x="1220.500" y="713.500" width="10" height="10" stroke="#8c8c8c"/><rect x="1226" y="713" width="5" height="11" fill="#767676"/>
 <path d="M1245 731L1261 715M1250 731L1261 720M1255 731L1261 725" stroke="#383838"/>
</svg>
<div style="left:40px;top:80px;width:1221px;height:1px;background:#272727"></div>
<div style="left:272px;top:81px;width:1px;height:19px;background:#555"></div>
<!--STATUS-->
</body>
</html>
